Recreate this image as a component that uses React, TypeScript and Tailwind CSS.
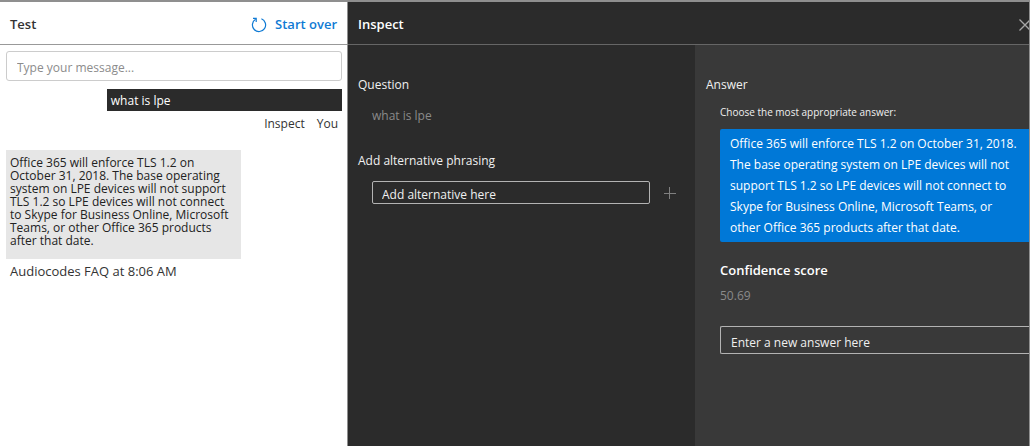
import { useState } from "react"

const ANSWER =
  "Office 365 will enforce TLS 1.2 on October 31, 2018. The base operating system on LPE devices will not support TLS 1.2 so LPE devices will not connect to Skype for Business Online, Microsoft Teams, or other Office 365 products after that date."

const RestartIcon = () => (
  <svg width="16" height="16" viewBox="0 0 16 16" fill="none" stroke="currentColor" strokeWidth="1.2">
    <path d="M10.4 1.8A6.6 6.6 0 1 1 4.6 2.3" />
    <path d="M2 1.4h3.2v3.6" />
  </svg>
)

const PlusIcon = () => (
  <svg width="12" height="12" viewBox="0 0 12 12" stroke="currentColor" strokeWidth="1">
    <path d="M0 6.5h12M5.5 0v12" />
  </svg>
)

const CloseIcon = () => (
  <svg width="12" height="12" viewBox="0 0 12 12" stroke="currentColor" strokeWidth="1.3">
    <path d="M0.5 0.5l11 11M11.5 0.5l-11 11" />
  </svg>
)

const TestPanel = () => {
  const [message, setMessage] = useState("")

  return (
    <section className="flex flex-col border-r border-[#8f8f8f] bg-white text-[#333333]">
      <header className="flex h-[43px] items-center justify-between border-b border-[#999999] px-[10px] pt-[3px] text-[13px]">
        <h2 className="font-semibold">Test</h2>
        <button className="flex items-center gap-2 font-semibold text-[#0f7ad4]">
          <RestartIcon />
          Start over
        </button>
      </header>

      <div className="flex flex-col pt-[6px] pr-[5px] pl-[6px]">
        <input
          aria-label="Message"
          className="h-[30px] w-full rounded-[3px] border border-[#cccccc] px-[10px] pt-[2px] placeholder:text-[#8c8c8c] outline-none"
          placeholder="Type your message..."
          value={message}
          onChange={(e) => setMessage(e.target.value)}
        />
        <p className="mt-2 h-[22px] w-[70%] self-end bg-[#2b2b2b] px-1 leading-6 text-white">what is lpe</p>
        <div className="flex justify-end gap-3 pt-[1px] pr-1 leading-6">
          <button>Inspect</button>
          <span>You</span>
        </div>

        <p className="mt-[14px] w-[70%] bg-[#e6e6e6] pt-[6px] pr-2 pb-3 pl-1 leading-[13px] text-[#222222]">
          {ANSWER}
        </p>
        <p className="px-1 text-[13px] leading-6">Audiocodes FAQ at 8:06 AM</p>
      </div>
    </section>
  )
}

const InspectPanel = () => {
  const [alternative, setAlternative] = useState("")
  const [newAnswer, setNewAnswer] = useState("")

  return (
    <section className="flex flex-col overflow-hidden border-r border-[#8f8f8f] bg-[#2b2b2b] text-[#f0f0f0]">
      <header className="flex h-[43px] shrink-0 items-center justify-between border-b border-[#666666] pt-[3px] pl-[10px] text-[13px]">
        <h2 className="font-semibold text-white">Inspect</h2>
        <button aria-label="Close" className="-mr-[2px] text-[#a6a6a6]">
          <CloseIcon />
        </button>
      </header>

      <div className="grid flex-1 grid-cols-[347fr_334fr]">
        <div className="pt-[29px] pr-[19px] pl-[10px]">
          <h3 className="leading-[21px]">Question</h3>
          <p className="mt-[10px] pl-[14px] leading-[21px] text-[#8a8a8a]">what is lpe</p>
          <label htmlFor="alternative" className="mt-6 block leading-[21px]">
            Add alternative phrasing
          </label>
          <div className="mt-[10px] flex items-center gap-[14px] pl-[14px]">
            <input
              id="alternative"
              className="h-[23px] min-w-0 flex-1 rounded-[2px] border border-[#b3b3b3] px-[9px] pt-[4px] placeholder:text-[#f0f0f0] outline-none"
              placeholder="Add alternative here"
              value={alternative}
              onChange={(e) => setAlternative(e.target.value)}
            />
            <button aria-label="Add" className="text-[#808080]">
              <PlusIcon />
            </button>
          </div>
        </div>

        <div className="bg-[#393939] pt-[29px] pl-[11px]">
          <h3 className="leading-[21px]">Answer</h3>
          <div className="pl-[14px]">
            <p className="mt-2 text-[10px] leading-[18px]">Choose the most appropriate answer:</p>
            <button className="mt-2 block w-full rounded-l-[2px] bg-[#0078d7] py-1 pr-[8px] pl-[10px] text-left leading-[21px] text-white">
              {ANSWER}
            </button>
            <h3 className="mt-[18px] text-[13px] leading-[21px] font-semibold text-white">Confidence score</h3>
            <p className="mt-1 leading-[21px] text-[#8a8a8a]">50.69</p>
            <input
              aria-label="New answer"
              className="mt-5 h-[28px] w-full rounded-l-[2px] border border-r-0 border-[#b3b3b3] px-[10px] pt-[4px] placeholder:text-[#f0f0f0] outline-none"
              placeholder="Enter a new answer here"
              value={newAnswer}
              onChange={(e) => setNewAnswer(e.target.value)}
            />
          </div>
        </div>
      </div>
    </section>
  )
}

const App = () => {
  return (
    <main className="grid min-h-screen grid-cols-[348fr_682fr] border-t-2 border-[#8f8f8f] font-['Open_Sans','Noto_Sans',sans-serif] text-[12px]">
      <TestPanel />
      <InspectPanel />
    </main>
  )
}

export default App
